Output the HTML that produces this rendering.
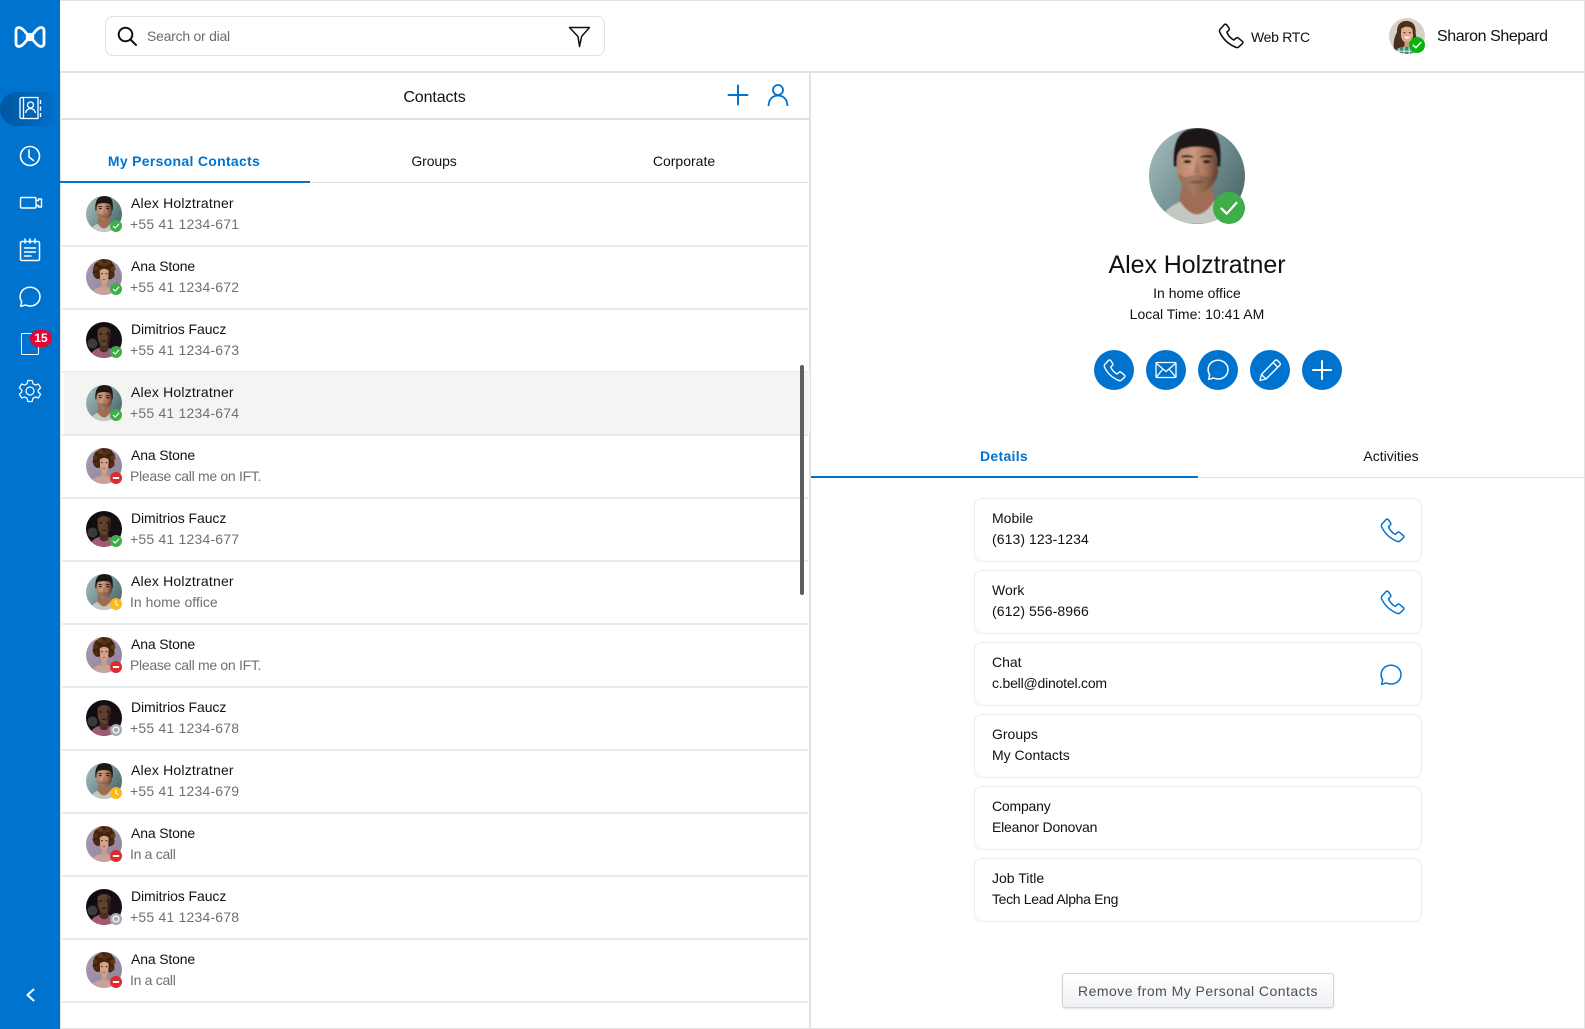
<!DOCTYPE html>
<html lang="en"><head><meta charset="utf-8"><title>Contacts</title>
<style>
*{box-sizing:border-box}
html,body{margin:0;padding:0;width:1585px;height:1029px;overflow:hidden;background:#fff;font-family:"Liberation Sans",sans-serif;color:#111}
.a{position:absolute}
.t{position:absolute;white-space:nowrap;line-height:20px}
.c{transform:translateX(-50%)}
svg{display:block;overflow:visible}
.row{position:absolute;left:62px;width:746px;height:63px;border-bottom:2px solid #e9e9e9}
.row .n{position:absolute;left:69px;top:9px;font-size:14px;line-height:20px;color:#111;white-space:nowrap}
.row .s{position:absolute;left:68px;top:30px;font-size:14px;line-height:20px;color:#707070;white-space:nowrap;letter-spacing:.2px}
.n.al{letter-spacing:.2px}.n.an{letter-spacing:-.15px}.n.di{letter-spacing:-.08px}
.row .s.p{letter-spacing:-.3px}.row .s.h{letter-spacing:0}
.row svg.av{position:absolute;left:24px;top:12px;width:36px;height:36px}
.row svg.b{position:absolute;left:48px;top:36px;width:12px;height:12px}
.card{position:absolute;left:974px;width:448px;height:64px;border:1px solid #ececec;border-radius:8px;background:#fff}
.card .l{position:absolute;left:17px;top:9px;font-size:14px;line-height:20px;white-space:nowrap}
.card .v{position:absolute;left:17px;top:30px;font-size:14px;line-height:20px;white-space:nowrap}
.card svg{position:absolute;left:404px;top:18px;width:26px;height:26px}
.act{position:absolute;top:350px;width:40px;height:40px;border-radius:50%;background:#0073cf}
.act svg{position:absolute;left:8px;top:8px;width:24px;height:24px}
.nav{position:absolute;left:18px;width:24px;height:24px}
</style></head><body>
<svg width="0" height="0" style="position:absolute">
<defs>
<clipPath id="cc"><circle cx="50" cy="50" r="50"/></clipPath>
<linearGradient id="mbg" x1="0" y1="0" x2="1" y2=".7"><stop offset="0" stop-color="#a9c2c3"/><stop offset="1" stop-color="#4c6a6d"/></linearGradient>
<linearGradient id="wbg" x1="0" y1="0" x2="1" y2="1"><stop offset="0" stop-color="#a99cb2"/><stop offset="1" stop-color="#8f8298"/></linearGradient>
<linearGradient id="dbg" x1="0" y1="0" x2="1" y2="1"><stop offset="0" stop-color="#0d0810"/><stop offset="1" stop-color="#1c1218"/></linearGradient>
<linearGradient id="mskin" x1="0" y1="0" x2="1" y2="0"><stop offset="0" stop-color="#b98568"/><stop offset=".4" stop-color="#cb9a7e"/><stop offset=".7" stop-color="#a87458"/><stop offset="1" stop-color="#5f3e30"/></linearGradient>
<filter id="bl" x="-10%" y="-10%" width="120%" height="120%"><feGaussianBlur stdDeviation=".9"/></filter>
<symbol id="man" viewBox="0 0 100 100"><g clip-path="url(#cc)"><rect width="100" height="100" fill="url(#mbg)"/><g filter="url(#bl)">
<path d="M10 100Q14 84 34 76L68 76Q86 84 92 100Z" fill="#c3c9c2"/>
<path d="M34 60L32 76Q50 104 68 76L66 60Z" fill="#a06c53"/>
<path d="M30 24Q50 12 70 24L72 46Q69 64 50 71Q33 64 29 46Z" fill="url(#mskin)"/>
<path d="M30 47Q33 64 50 71Q67 64 70 47Q62 53 58 50Q50 48 42 50Q37 53 30 47Z" fill="#4f3a30" opacity=".32"/>
<path d="M26 40Q24 8 40 2Q52-2 64 2Q77 8 74 40L71 40Q72 26 66 22Q50 17 34 22Q28 26 29 40Z" fill="#1b1716"/>
<path d="M34 29Q40 27 46 29.500L46 31Q40 30 34 31ZM54 29.500Q60 27 66 29L66 31Q60 30 54 31Z" fill="#241b17"/>
<ellipse cx="40" cy="35" rx="4" ry="1.700" fill="#1f1613"/><ellipse cx="60" cy="35" rx="4" ry="1.700" fill="#1f1613"/>
<path d="M50 34L46 48L54 48Z" fill="#8f5e48" opacity=".45"/><path d="M42 56Q50 53.500 58 56Q50 60 42 56Z" fill="#8a4f44"/>
</g></g></symbol>
<symbol id="woman" viewBox="0 0 100 100"><g clip-path="url(#cc)"><rect width="100" height="100" fill="url(#wbg)"/><g filter="url(#bl)">
<path d="M12 100Q18 82 38 78L62 78Q82 82 88 100Z" fill="#c8a39d"/>
<rect x="43" y="58" width="15" height="24" fill="#c99c86"/>
<path d="M22 28Q20 12 32 8Q40-3 54 1Q68-1 74 12Q84 20 78 36Q82 48 72 54Q66 60 62 54L38 54Q26 58 24 48Q14 38 22 28Z" fill="#3f2210"/>
<circle cx="26" cy="26" r="7" fill="#5a3216"/><circle cx="40" cy="10" r="7" fill="#643a1b"/><circle cx="62" cy="10" r="7" fill="#5a3216"/><circle cx="75" cy="28" r="7" fill="#643a1b"/><circle cx="28" cy="45" r="7" fill="#4f2c13"/><circle cx="72" cy="46" r="7" fill="#4f2c13"/><circle cx="51" cy="16" r="6" fill="#55301a"/>
<path d="M38 32Q50 22 63 32L62 52Q58 66 50 67Q42 66 39 52Z" fill="#d3a388"/>
<ellipse cx="44" cy="41" rx="3" ry="1.500" fill="#2e1d15"/><ellipse cx="57" cy="41" rx="3" ry="1.500" fill="#2e1d15"/><path d="M45 57Q50 54.500 55 57Q50 61 45 57Z" fill="#a5483f"/>
</g></g></symbol>
<symbol id="dim" viewBox="0 0 100 100"><g clip-path="url(#cc)"><rect width="100" height="100" fill="url(#dbg)"/><g filter="url(#bl)">
<ellipse cx="18" cy="60" rx="14" ry="14" fill="#3b3a3e"/>
<path d="M6 100Q16 78 36 72L64 72Q84 78 94 100Z" fill="#a15c74"/>
<path d="M38 56L38 78Q50 90 62 78L62 56Z" fill="#4a2f28"/>
<path d="M32 26Q32 8 50 8Q68 8 68 26L67 48Q62 66 50 67Q38 66 33 48Z" fill="#60402f"/>
<path d="M32 22Q34 4 50 4Q66 4 68 22Q60 14 50 14Q40 14 32 22Z" fill="#130d0d"/>
<ellipse cx="41" cy="33" rx="4" ry="1.800" fill="#140c0b"/><ellipse cx="59" cy="33" rx="4" ry="1.800" fill="#140c0b"/>
<path d="M42 53Q50 50 58 53Q50 58 42 53Z" fill="#2d1a18"/>
<path d="M60 18Q68 28 67 48L58 62Q62 40 60 18Z" fill="#2f1d17"/>
</g></g></symbol>
<symbol id="sharon" viewBox="0 0 100 100"><g clip-path="url(#cc)"><rect width="100" height="100" fill="#d6d1c6"/><g filter="url(#bl)">
<path d="M14 88Q10 60 22 40Q22 8 50 8Q76 10 74 44Q80 60 74 80L60 80L28 90Z" fill="#4b2e1e"/>
<path d="M8 100Q18 82 40 80L64 80Q84 84 92 100Z" fill="#3f8a78"/><path d="M28 84L28 100M42 80L42 100M56 80L56 100M18 92L80 92" stroke="#e6efe9" stroke-width="3"/>
<path d="M34 30Q50 18 65 30L67 50Q63 68 50 70Q37 68 33 50Z" fill="#e0ad90"/>
<rect x="43" y="64" width="14" height="16" fill="#cf9c80"/>
<ellipse cx="43" cy="41" rx="3" ry="1.600" fill="#3a2118"/><ellipse cx="58" cy="41" rx="3" ry="1.600" fill="#3a2118"/><path d="M41 52Q50 62 59 52Z" fill="#fff"/>
</g></g></symbol>
<symbol id="ok" viewBox="0 0 12 12"><circle cx="6" cy="6" r="6" fill="#3fae49"/><path d="M3.200 6.200 5.200 8.100 8.800 4.100" fill="none" stroke="#fff" stroke-width="1.100" stroke-linecap="round" stroke-linejoin="round"/></symbol>
<symbol id="dnd" viewBox="0 0 12 12"><circle cx="6" cy="6" r="6" fill="#dc2c30"/><rect x="2.800" y="5" width="6.400" height="2" rx=".6" fill="#fff"/></symbol>
<symbol id="away" viewBox="0 0 12 12"><circle cx="6" cy="6" r="6" fill="#fbb91a"/><path d="M6 3V6.400L8 7.600" fill="none" stroke="#fff" stroke-width="1.200" stroke-linecap="round"/></symbol>
<symbol id="off" viewBox="0 0 12 12"><circle cx="6" cy="6" r="6" fill="#a5acb1"/><circle cx="6" cy="6" r="3" fill="none" stroke="#fff" stroke-width="1.200"/></symbol>
<symbol id="phone" viewBox="0 0 26 26"><path d="M3 7 7 2.600Q8.200 1.600 9.300 2.600L11.600 6Q12.200 7 11.400 7.900L9.500 9.800Q11.500 14.800 16.200 17.400L18.500 15.400Q19.500 14.700 20.500 15.400L24.400 18.600Q25.400 19.700 24.400 20.800L21 24Q19.800 25 18 24.300C10 21 5 15 2.500 9.500Q2.200 8 3 7Z" fill="none" stroke="currentColor" stroke-width="1.500" stroke-linejoin="round"/></symbol>
<symbol id="chat" viewBox="0 0 24 24"><path d="M12 2.200C17.700 2.200 22 6.300 22 11.600S17.700 21 12 21C10.400 21 8.900 20.700 7.600 20L2.600 21.300 3.700 16.800C2.700 15.300 2.100 13.500 2.100 11.600 2.100 6.300 6.400 2.200 12 2.200Z" fill="none" stroke="currentColor" stroke-width="1.500" stroke-linejoin="round"/></symbol>
</defs></svg>

<!-- frame -->
<div class="a" style="left:0;top:0;width:1585px;height:1px;background:#e2e2e2"></div>
<div class="a" style="left:60px;top:71px;width:1525px;height:2px;background:#e2e2e2"></div>
<div class="a" style="left:60px;top:118px;width:750px;height:2px;background:#e2e2e2"></div>
<div class="a" style="left:60px;top:73px;width:1px;height:956px;background:#e2e2e2"></div>
<div class="a" style="left:809px;top:73px;width:2px;height:956px;background:#e2e2e2"></div>
<div class="a" style="left:1584px;top:0;width:1px;height:1029px;background:#e2e2e2"></div>
<div class="a" style="left:60px;top:1028px;width:1525px;height:1px;background:#e2e2e2"></div>

<!-- sidebar -->
<div class="a" style="left:0;top:0;width:60px;height:1029px;background:#0073cf"></div>
<svg class="a" style="left:14px;top:25px" width="32" height="24" viewBox="0 0 32 24" fill="none" stroke="#fff" stroke-width="2.800" stroke-linejoin="round"><path d="M5 2.500Q2 2.500 2 6V18Q2 21.500 5 21.500Q8 21.500 12.500 15.500Q16 12 19.500 8.500Q24 2.500 27 2.500Q30 2.500 30 6V18Q30 21.500 27 21.500Q24 21.500 19.500 15.500Q16 12 12.500 8.500Q8 2.500 5 2.500Z"/><circle cx="16" cy="12" r="3.200" stroke-width="2.200"/></svg>
<div class="a" style="left:0;top:92px;width:60px;height:34px;border-radius:17px 0 0 17px;background:linear-gradient(90deg,#00569f,#0073cf)"></div>
<svg class="nav" style="top:96px" viewBox="0 0 24 24" fill="none" stroke="#fff" stroke-width="1.300"><path d="M3.500 1.500H20V22.500H3.500A1.500 1.500 0 0 1 2 21V3A1.500 1.500 0 0 1 3.500 1.500ZM5.500 1.500V22.500"/><circle cx="12.500" cy="9" r="3"/><path d="M7.500 17Q8.500 12.800 12.500 12.500Q16.500 12.800 17.500 17"/><path d="M22.500 4V8M22.500 10.500V14.500M22.500 17V21" stroke-width="1.400"/></svg>
<svg class="nav" style="top:144px" viewBox="0 0 24 24" fill="none" stroke="#fff" stroke-width="1.600" stroke-linecap="round"><circle cx="12" cy="12" r="9.500"/><path d="M11 6V13L15.500 16.500"/></svg>
<svg class="nav" style="top:191px" viewBox="0 0 24 24" fill="none" stroke="#fff" stroke-width="1.400" stroke-linejoin="round"><rect x="2.500" y="6.500" width="15.500" height="10.500" rx="1.200"/><path d="M18 9.500H20.500V8H23.500V16H20.500V14.500H18"/></svg>
<svg class="nav" style="top:238px" viewBox="0 0 24 24" fill="none" stroke="#fff" stroke-width="1.500" stroke-linecap="round"><rect x="2.500" y="3.500" width="19" height="19" rx="1.500"/><path d="M7 1V5M12 1V5M17 1V5M6.500 10H17.500M6.500 14H17.500M6.500 18H13"/></svg>
<svg class="nav" style="top:285px;color:#fff" viewBox="0 0 24 24"><use href="#chat"/></svg>
<div class="a" style="left:21px;top:333px;width:18px;height:22px;border:1.500px solid #fff;border-radius:1.500px"></div>
<div class="a" style="left:30px;top:330px;width:22px;height:17px;border-radius:9px;background:#e4062e;color:#fff;font-size:12px;font-weight:bold;line-height:17px;text-align:center">15</div>
<svg class="nav" style="top:379px" viewBox="0 0 24 24" fill="none" stroke="#fff" stroke-width="1.200" stroke-linejoin="round"><circle cx="12" cy="12" r="4"/><path d="M9.800 1.500H14.200L14.900 4.700 17.300 6 20.400 5 22.600 8.800 20.200 11 20.200 13 22.600 15.200 20.400 19 17.300 18 14.900 19.300 14.200 22.500H9.800L9.100 19.300 6.700 18 3.600 19 1.400 15.200 3.800 13 3.800 11 1.400 8.800 3.600 5 6.700 6 9.100 4.700Z"/></svg>
<svg class="a" style="left:24px;top:987px" width="12" height="16" viewBox="0 0 12 16" fill="none" stroke="#fff" stroke-width="2" stroke-linecap="round" stroke-linejoin="round"><path d="M9.500 2.500 3.500 8 9.500 13.500"/></svg>

<!-- top bar -->
<div class="a" style="left:105px;top:16px;width:500px;height:40px;border:1px solid #e0e0e0;border-radius:8px"></div>
<svg class="a" style="left:117px;top:26px" width="21" height="21" viewBox="0 0 21 21" fill="none" stroke="#111" stroke-width="2" stroke-linecap="round"><circle cx="8.500" cy="8.500" r="6.800"/><path d="M13.500 13.500 19 19"/></svg>
<div class="t" style="left:147px;top:26px;font-size:14px;color:#6d6d6d;letter-spacing:-.25px">Search or dial</div>
<svg class="a" style="left:568px;top:25px" width="23" height="23" viewBox="0 0 23 23" fill="none" stroke="#111" stroke-width="1.500" stroke-linejoin="round"><path d="M1.500 2.500H21.500L13.600 11.500 11.500 21.500 10 11.500Z"/></svg>
<svg class="a" style="left:1217px;top:22px;color:#111" width="27" height="27" viewBox="0 0 26 26"><use href="#phone"/></svg>
<div class="t" style="left:1251px;top:27px;font-size:14px;letter-spacing:-.3px">Web RTC</div>
<svg class="a" style="left:1389px;top:18px" width="36" height="36" viewBox="0 0 100 100"><use href="#sharon" width="100" height="100"/></svg>
<svg class="a" style="left:1409px;top:37px" width="16" height="16" viewBox="0 0 12 12"><circle cx="6" cy="6" r="6" fill="#08b30d"/><path d="M3.200 6.200 5.200 8.100 8.800 4.100" fill="none" stroke="#fff" stroke-width="1.100" stroke-linecap="round" stroke-linejoin="round"/></svg>
<div class="t" style="left:1437px;top:27px;font-size:16px;letter-spacing:-.42px">Sharon Shepard</div>

<!-- left panel -->
<div class="t c" style="left:434.500px;top:88px;font-size:16px;letter-spacing:-.1px">Contacts</div>
<svg class="a" style="left:727px;top:84px" width="22" height="22" viewBox="0 0 22 22" stroke="#0073cf" stroke-width="2" stroke-linecap="round"><path d="M11 1.500V20.500M1.500 11H20.500"/></svg>
<svg class="a" style="left:767px;top:83px" width="22" height="24" viewBox="0 0 22 24" fill="none" stroke="#0073cf" stroke-width="1.800"><circle cx="11" cy="7" r="5"/><path d="M1.500 23Q2 13 11 12.500Q20 13 20.500 23"/></svg>

<div class="t c" style="left:184px;top:151px;font-size:14px;font-weight:bold;color:#0073cf;letter-spacing:.3px">My Personal Contacts</div>
<div class="t c" style="left:434px;top:151px;font-size:14px;letter-spacing:-.1px">Groups</div>
<div class="t c" style="left:684px;top:151px;font-size:14px">Corporate</div>
<div class="a" style="left:60px;top:182px;width:750px;height:1px;background:#e2e2e2"></div>
<div class="a" style="left:60px;top:181px;width:250px;height:2px;background:#0073cf"></div>

<div class="row" style="top:184px"><svg class="av" viewBox="0 0 100 100"><use href="#man" width="100" height="100"/></svg><svg class="b"><use href="#ok" width="12" height="12"/></svg><div class="n al">Alex Holztratner</div><div class="s">+55 41 1234-671</div></div>
<div class="row" style="top:247px"><svg class="av" viewBox="0 0 100 100"><use href="#woman" width="100" height="100"/></svg><svg class="b"><use href="#ok" width="12" height="12"/></svg><div class="n an">Ana Stone</div><div class="s">+55 41 1234-672</div></div>
<div class="row" style="top:310px"><svg class="av" viewBox="0 0 100 100"><use href="#dim" width="100" height="100"/></svg><svg class="b"><use href="#ok" width="12" height="12"/></svg><div class="n di">Dimitrios Faucz</div><div class="s">+55 41 1234-673</div></div>
<div class="a" style="left:64px;top:372px;width:746px;height:62px;background:#f4f4f2"></div>
<div class="row" style="top:373px"><svg class="av" viewBox="0 0 100 100"><use href="#man" width="100" height="100"/></svg><svg class="b"><use href="#ok" width="12" height="12"/></svg><div class="n al">Alex Holztratner</div><div class="s">+55 41 1234-674</div></div>
<div class="row" style="top:436px"><svg class="av" viewBox="0 0 100 100"><use href="#woman" width="100" height="100"/></svg><svg class="b"><use href="#dnd" width="12" height="12"/></svg><div class="n an">Ana Stone</div><div class="s p">Please call me on IFT.</div></div>
<div class="row" style="top:499px"><svg class="av" viewBox="0 0 100 100"><use href="#dim" width="100" height="100"/></svg><svg class="b"><use href="#ok" width="12" height="12"/></svg><div class="n di">Dimitrios Faucz</div><div class="s">+55 41 1234-677</div></div>
<div class="row" style="top:562px"><svg class="av" viewBox="0 0 100 100"><use href="#man" width="100" height="100"/></svg><svg class="b"><use href="#away" width="12" height="12"/></svg><div class="n al">Alex Holztratner</div><div class="s h">In home office</div></div>
<div class="row" style="top:625px"><svg class="av" viewBox="0 0 100 100"><use href="#woman" width="100" height="100"/></svg><svg class="b"><use href="#dnd" width="12" height="12"/></svg><div class="n an">Ana Stone</div><div class="s p">Please call me on IFT.</div></div>
<div class="row" style="top:688px"><svg class="av" viewBox="0 0 100 100"><use href="#dim" width="100" height="100"/></svg><svg class="b"><use href="#off" width="12" height="12"/></svg><div class="n di">Dimitrios Faucz</div><div class="s">+55 41 1234-678</div></div>
<div class="row" style="top:751px"><svg class="av" viewBox="0 0 100 100"><use href="#man" width="100" height="100"/></svg><svg class="b"><use href="#away" width="12" height="12"/></svg><div class="n al">Alex Holztratner</div><div class="s">+55 41 1234-679</div></div>
<div class="row" style="top:814px"><svg class="av" viewBox="0 0 100 100"><use href="#woman" width="100" height="100"/></svg><svg class="b"><use href="#dnd" width="12" height="12"/></svg><div class="n an">Ana Stone</div><div class="s p">In a call</div></div>
<div class="row" style="top:877px"><svg class="av" viewBox="0 0 100 100"><use href="#dim" width="100" height="100"/></svg><svg class="b"><use href="#off" width="12" height="12"/></svg><div class="n di">Dimitrios Faucz</div><div class="s">+55 41 1234-678</div></div>
<div class="row" style="top:940px"><svg class="av" viewBox="0 0 100 100"><use href="#woman" width="100" height="100"/></svg><svg class="b"><use href="#dnd" width="12" height="12"/></svg><div class="n an">Ana Stone</div><div class="s p">In a call</div></div>
<div class="a" style="left:800px;top:365px;width:4px;height:230px;background:#5e5e5e;border-radius:2px"></div>

<!-- right panel -->
<svg class="a" style="left:1149px;top:128px" width="96" height="96" viewBox="0 0 100 100"><use href="#man" width="100" height="100"/></svg>
<svg class="a" style="left:1213px;top:192px" width="32" height="32" viewBox="0 0 32 32"><circle cx="16" cy="16" r="16" fill="#3fae49"/><path d="M8.500 16.500 13.700 21.700 23.500 10.800" fill="none" stroke="#fff" stroke-width="2.200" stroke-linecap="round" stroke-linejoin="round"/></svg>
<div class="t c" style="left:1197px;top:250px;font-size:25px;line-height:30px;letter-spacing:-.05px">Alex Holztratner</div>
<div class="t c" style="left:1197px;top:283px;font-size:14px">In home office</div>
<div class="t c" style="left:1197px;top:304px;font-size:14px">Local Time: 10:41 AM</div>
<div class="act" style="left:1094px;color:#fff"><svg viewBox="0 0 26 26"><use href="#phone"/></svg></div>
<div class="act" style="left:1146px"><svg viewBox="0 0 24 24" fill="none" stroke="#fff" stroke-width="1.300" stroke-linejoin="round"><rect x="2" y="4.500" width="20" height="15" rx="1"/><path d="M2.500 5.500 12 13.500 21.500 5.500M2.500 18.800 9 11M21.500 18.800 15 11"/></svg></div>
<div class="act" style="left:1198px;color:#fff"><svg viewBox="0 0 24 24"><use href="#chat"/></svg></div>
<div class="act" style="left:1250px"><svg viewBox="0 0 24 24" fill="none" stroke="#fff" stroke-width="1.400" stroke-linejoin="round"><path d="M17 2.500Q18.200 1.500 19.500 2.500L21.800 4.700Q22.800 6 21.800 7.200L8 21 2 22.500 3.500 16.500ZM15 4.500 20 9.500M3.500 16.500 8 21"/></svg></div>
<div class="act" style="left:1302px"><svg viewBox="0 0 24 24" stroke="#fff" stroke-width="2" stroke-linecap="round"><path d="M12 3V21M3 12H21"/></svg></div>

<div class="t c" style="left:1004px;top:446px;font-size:14px;font-weight:bold;color:#0073cf;letter-spacing:.3px">Details</div>
<div class="t c" style="left:1391px;top:446px;font-size:14px">Activities</div>
<div class="a" style="left:811px;top:477px;width:774px;height:1px;background:#e2e2e2"></div>
<div class="a" style="left:811px;top:476px;width:387px;height:2px;background:#0073cf"></div>

<div class="card" style="top:498px"><div class="l">Mobile</div><div class="v" style="letter-spacing:.08px">(613) 123-1234</div><svg style="color:#0073cf"><use href="#phone" width="26" height="26"/></svg></div>
<div class="card" style="top:570px"><div class="l">Work</div><div class="v" style="letter-spacing:.08px">(612) 556-8966</div><svg style="color:#0073cf"><use href="#phone" width="26" height="26"/></svg></div>
<div class="card" style="top:642px"><div class="l">Chat</div><div class="v" style="letter-spacing:-.2px">c.bell@dinotel.com</div><svg style="color:#0073cf;top:20px;left:404px;width:24px;height:24px"><use href="#chat" width="24" height="24"/></svg></div>
<div class="card" style="top:714px"><div class="l">Groups</div><div class="v">My Contacts</div></div>
<div class="card" style="top:786px"><div class="l" style="letter-spacing:-.2px">Company</div><div class="v" style="letter-spacing:-.2px">Eleanor Donovan</div></div>
<div class="card" style="top:858px"><div class="l">Job Title</div><div class="v" style="letter-spacing:-.33px">Tech Lead Alpha Eng</div></div>

<div class="a" style="left:1062px;top:973px;width:272px;height:35px;border:1px solid #d2d4d8;border-radius:3px;background:linear-gradient(#fff,#eff1f4);box-shadow:0 1px 2px rgba(0,0,0,.12);text-align:center;font-size:14px;line-height:34px;color:#4a4f57;letter-spacing:.47px">Remove from My Personal Contacts</div>
</body></html>
